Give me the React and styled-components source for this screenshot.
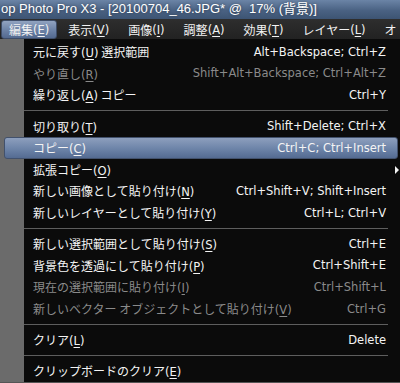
import React from 'react';
import styled, { createGlobalStyle } from 'styled-components';

const GlobalStyle = createGlobalStyle`
  html, body {
    margin: 0;
    padding: 0;
    background: #0b0b0b;
    overflow: hidden;
  }
`;

const jp = `"Noto Sans CJK JP", "DejaVu Sans", sans-serif`;

const menuBarItems = [
  { label: '編集', key: 'E', active: true },
  { label: '表示', key: 'V' },
  { label: '画像', key: 'I' },
  { label: '調整', key: 'A' },
  { label: '効果', key: 'T' },
  { label: 'レイヤー', key: 'L' },
  { label: 'オ' },
];

const items = [
  { label: '元に戻す', key: 'U', extra: ' 選択範囲', shortcut: 'Alt+Backspace; Ctrl+Z' },
  { label: 'やり直し', key: 'R', shortcut: 'Shift+Alt+Backspace; Ctrl+Alt+Z', disabled: true },
  { label: '繰り返し', key: 'A', extra: ' コピー', shortcut: 'Ctrl+Y' },
  { sep: true },
  { label: '切り取り', key: 'T', shortcut: 'Shift+Delete; Ctrl+X' },
  { label: 'コピー', key: 'C', shortcut: 'Ctrl+C; Ctrl+Insert', active: true },
  { label: '拡張コピー', key: 'O', submenu: true },
  { label: '新しい画像として貼り付け', key: 'N', shortcut: 'Ctrl+Shift+V; Shift+Insert' },
  { label: '新しいレイヤーとして貼り付け', key: 'Y', shortcut: 'Ctrl+L; Ctrl+V' },
  { sep: true },
  { label: '新しい選択範囲として貼り付け', key: 'S', shortcut: 'Ctrl+E' },
  { label: '背景色を透過にして貼り付け', key: 'P', shortcut: 'Ctrl+Shift+E' },
  { label: '現在の選択範囲に貼り付け', key: 'I', shortcut: 'Ctrl+Shift+L', disabled: true },
  { label: '新しいベクター オブジェクトとして貼り付け', key: 'V', shortcut: 'Ctrl+G', disabled: true },
  { sep: true },
  { label: 'クリア', key: 'L', shortcut: 'Delete' },
  { sep: true },
  { label: 'クリップボードのクリア', key: 'E' },
];

const Window = styled.div`
  width: 400px;
  height: 383px;
  display: flex;
  flex-direction: column;
  overflow: hidden;
  font-family: ${jp};
`;

const TitleBar = styled.div`
  height: 19px;
  flex: none;
  background: linear-gradient(#6b84a6, #4a6283 55%, #3d5473);
  color: #fff;
  font-family: "Liberation Sans", Arial, ${jp};
  font-size: 13px;
  line-height: 18px;
  padding-left: 1px;
  white-space: nowrap;
  text-shadow: 0 0 3px rgba(0, 0, 0, 0.4);
`;

const MenuBar = styled.div`
  height: 19px;
  flex: none;
  display: flex;
  align-items: stretch;
  background: linear-gradient(#2e2e2e, #222);
  padding: 1px 0 0 1px;
  white-space: nowrap;
`;

const BarItem = styled.div`
  display: flex;
  align-items: center;
  padding: 0 7px;
  margin-right: 3px;
  font-size: 12px;
  color: #f2f2f2;
  border-radius: 3px;
  border: 1px solid ${p => (p.$active ? '#3e4d68' : 'transparent')};
  background: ${p => (p.$active ? 'linear-gradient(#91a3c0, #6e84a8 50%, #53698f)' : 'none')};
`;

const Lat = styled.span`
  font-family: "DejaVu Sans", Verdana, sans-serif;
  font-size: 11.5px;
`;

const Key = styled.span`
  text-decoration: underline;
  text-underline-offset: 2px;
  text-decoration-thickness: 1px;
`;

const Body = styled.div`
  flex: 1;
  display: flex;
  flex-direction: column;
  padding-top: 2px;
  background: linear-gradient(to right, #6b6b6b 24px, #0b0b0b 24px);
  border-bottom: 1px solid #555;
`;

const Item = styled.div`
  height: 21.6px;
  flex: none;
  margin: 0 2px 0 4px;
  padding: 0 11px 0 28px;
  display: flex;
  align-items: center;
  justify-content: space-between;
  font-size: 12px;
  white-space: nowrap;
  box-sizing: border-box;
  color: ${p => (p.$disabled ? '#8a8a8a' : '#f4f4f4')};
  border-radius: 3px;
  border: 1px solid ${p => (p.$active ? '#42516c' : 'transparent')};
  background: ${p => (p.$active ? 'linear-gradient(#8d9fbd, #6f86aa 50%, #546b92)' : 'none')};
  position: relative;
`;

const Arrow = styled.span`
  position: absolute;
  right: -2px;
  top: 6px;
  width: 0;
  height: 0;
  border-top: 4px solid transparent;
  border-bottom: 4px solid transparent;
  border-left: 4px solid #f4f4f4;
`;

const Separator = styled.div`
  height: 9.6px;
  flex: none;
  display: flex;
  align-items: center;
  margin: 0 12px 0 24px;
  &::before {
    content: '';
    flex: 1;
    height: 1px;
    background: #5e5e5e;
  }
`;

const Mnemonic = ({ k }) => (
  <Lat>
    (<Key>{k}</Key>)
  </Lat>
);

export default function App() {
  return (
    <>
      <GlobalStyle />
      <Window>
        <TitleBar>op Photo Pro X3 - [20100704_46.JPG* @&nbsp; 17% (背景)]</TitleBar>
        <MenuBar>
          {menuBarItems.map(m => (
            <BarItem key={m.label} $active={m.active}>
              {m.label}
              {m.key && <Mnemonic k={m.key} />}
            </BarItem>
          ))}
        </MenuBar>
        <Body>
          {items.map((it, i) =>
            it.sep ? (
              <Separator key={i} />
            ) : (
              <Item key={i} $disabled={it.disabled} $active={it.active}>
                <span>
                  {it.label}
                  <Mnemonic k={it.key} />
                  {it.extra}
                </span>
                {it.shortcut && <Lat>{it.shortcut}</Lat>}
                {it.submenu && <Arrow />}
              </Item>
            )
          )}
        </Body>
      </Window>
    </>
  );
}
